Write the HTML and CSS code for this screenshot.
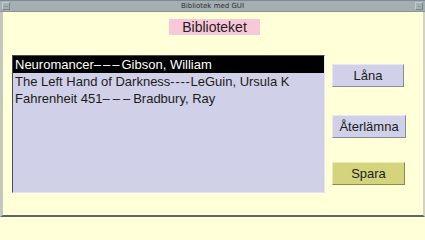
FILE: index.html
```html
<!DOCTYPE html>
<html>
<head>
<meta charset="utf-8">
<link rel="stylesheet" href="styles.css">
</head>
<body>
<div class="window">
  <div class="titlebar">
    <span class="tbox tbox-left">&ndash;</span>
    <span class="title">Bibliotek med GUI</span>
    <span class="tbox tbox-right">-</span>
  </div>
  <div class="content">
    <div class="header-row">
      <div class="label">Biblioteket</div>
    </div>
    <div class="main-row">
      <div class="list">
        <div class="row selected">Neuromancer<span class="dash dash-a">–––</span>Gibson, William</div>
        <div class="row">The Left Hand of Darkness<span class="dash dash-b">----</span>LeGuin, Ursula K</div>
        <div class="row">Fahrenheit 451<span class="dash dash-c">–––</span>Bradbury, Ray</div>
      </div>
      <div class="buttons">
        <div class="btn btn-lana">Låna</div>
        <div class="btn btn-ater">Återlämna</div>
        <div class="btn btn-spara">Spara</div>
      </div>
    </div>
  </div>
</div>
</body>
</html>
```
FILE: styles.css
```css
html, body {
  margin: 0;
  padding: 0;
  background: #ffffd8;
}
.window {
  width: 425px;
  height: 217px;
  display: flex;
  flex-direction: column;
  background: #ffffd8;
  font-family: "Liberation Sans", Arial, sans-serif;
  color: #1c1c1c;
}
.titlebar {
  height: 12px;
  box-sizing: border-box;
  background: #a3afb3;
  border-top: 1px solid #7e8a8e;
  border-bottom: 1px solid #8a9598;
  display: flex;
  align-items: center;
  justify-content: space-between;
  padding: 0 2px;
}
.title {
  font-family: "DejaVu Sans", sans-serif;
  font-size: 7px;
  color: #2a2e30;
  line-height: 10px;
}
.tbox {
  width: 8px;
  height: 8px;
  box-sizing: border-box;
  border: 1px solid #c4ccd0;
  border-right-color: #7a8488;
  border-bottom-color: #7a8488;
  font-size: 6px;
  line-height: 6px;
  text-align: center;
  color: #4a5054;
}
.content {
  flex: 1;
  box-sizing: border-box;
  border-left: 3px solid #c2c8bc;
  border-right: 2px solid #d0d4c8;
  border-bottom: 2px solid #5c6666;
  display: flex;
  flex-direction: column;
}
.header-row {
  display: flex;
  justify-content: center;
  padding-top: 7px;
  padding-left: 3px;
}
.label {
  width: 91px;
  height: 16px;
  line-height: 16px;
  background: #f6c8d8;
  text-align: center;
  font-size: 14px;
  color: #2a1a22;
}
.main-row {
  display: flex;
  margin-top: 20px;
  padding-left: 9px;
}
.list {
  width: 313px;
  height: 138px;
  box-sizing: border-box;
  background: #d0d0e8;
  border-top: 1px solid #4a4a54;
  border-left: 1px solid #4a4a54;
  border-right: 1px solid #e4e4f0;
  border-bottom: 1px solid #e4e4f0;
}
.row {
  height: 17px;
  line-height: 17px;
  padding-left: 2px;
  font-size: 13px;
  white-space: nowrap;
  color: #1c1c20;
}
.row.selected {
  background: #000000;
  color: #ffffff;
}
.dash-a {
  letter-spacing: 2px;
}
.dash-b {
  letter-spacing: 0.7px;
}
.dash-c {
  letter-spacing: 3px;
}
.buttons {
  display: flex;
  flex-direction: column;
  margin-left: 7px;
  padding-top: 9px;
}
.btn {
  width: 72px;
  height: 23px;
  box-sizing: border-box;
  line-height: 21px;
  text-align: center;
  font-size: 13px;
  color: #1c1c20;
  background: #d0d0e8;
  border: 1px solid #e8e8f4;
  border-right-color: #8a8a9c;
  border-bottom-color: #8a8a9c;
}
.btn-ater {
  margin-top: 28px;
  width: 74px;
}
.btn-spara {
  margin-top: 24px;
  width: 73px;
  background: #d4d47c;
  border-top-color: #ececb4;
  border-left-color: #ececb4;
  border-right-color: #8a8a50;
  border-bottom-color: #8a8a50;
}
```
